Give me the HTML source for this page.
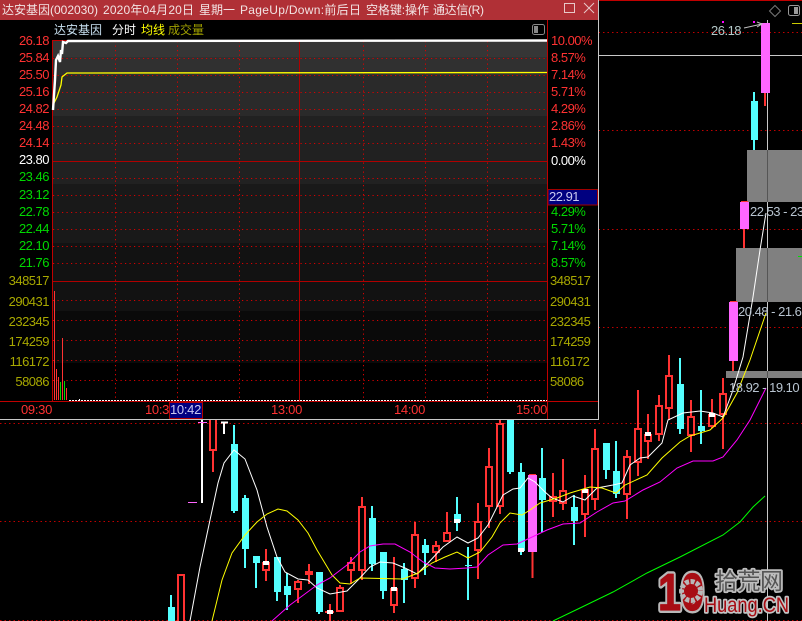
<!DOCTYPE html>
<html><head><meta charset="utf-8"><style>
html,body{margin:0;padding:0;background:#000;width:802px;height:621px;overflow:hidden}
svg{display:block}
text{font-family:"Liberation Sans","Noto Sans CJK SC",sans-serif;font-size:12px}
.n text,text.n{font-size:13px;letter-spacing:-.5px}
.t text{font-size:13px;letter-spacing:-.3px}
.c{shape-rendering:crispEdges}
.d{shape-rendering:auto}
</style></head><body>
<svg width="802" height="621" viewBox="0 0 802 621" xmlns="http://www.w3.org/2000/svg">
<rect width="802" height="621" fill="#000"/>
<rect x="598" y="0" width="204" height="1" fill="#c00000" class="c"/>
<g class="d" stroke="#c00000" stroke-dasharray="1.5 3" stroke-width="1"><path d="M0 32.5H802M0 130.5H802M0 229.5H802M0 327.5H802M0 423.5H802M0 521.5H802M0 620.5H802"/></g>
<g class="c">
<!-- gray boxes -->
<rect x="747" y="150" width="55" height="52" fill="#808080"/>
<rect x="736" y="248" width="66" height="54" fill="#808080"/>
<rect x="726" y="371" width="76" height="7" fill="#808080"/>
<!-- crosshair -->
<path d="M767.5 20V621" stroke="#c8c8c8"/>
<path d="M767.5 150V202M767.5 248V302M767.5 371V378" stroke="#555"/>
<path d="M598 55.5H802" stroke="#c8c8c8"/>
<!-- red wicks -->
<path stroke="#ff3232" stroke-width="2" fill="none" d="M213 451V472M266 549V562M266 571V581M298 580V581M298 590V603M309 564V571M309 575V584M330 604V621M340 585V587M351 557V562M351 571V584M362 497V506M362 571V580M394 557V588M394 606V613M415 522V534M415 579V588M436 541V545M436 553V562M447 512V532M478 503V521M478 551V579M489 448V466M489 507V528M500 420V423M500 507V514M553 473V496M553 502V517M563 459V490M563 504V510M585 475V489M585 515V537M595 429V448M595 500V510M627 450V456M627 495V519M638 390V428M638 463V476M648 414V434M648 442V459M659 395V405M659 435V441M669 355V375M669 409V420M691 400V416M691 436V452M712 399V414M712 427V428M723 378V393M723 415V449M532.5 552V578M733 361V371M744 229V248M765 93V106"/>
<!-- red hollow bodies -->
<g fill="#000" stroke="#ff3232" stroke-width="2">
<rect x="178" y="575" width="6" height="60"/><rect x="210" y="400" width="6" height="50"/><rect x="263" y="563" width="6" height="7"/><rect x="295" y="582" width="6" height="7"/><rect x="306" y="572" width="6" height="2"/><rect x="337" y="588" width="6" height="23"/><rect x="348" y="563" width="6" height="7"/><rect x="359" y="507" width="6" height="63"/><rect x="391" y="589" width="6" height="16"/><rect x="412" y="535" width="6" height="43"/><rect x="433" y="546" width="6" height="6"/><rect x="444" y="533" width="6" height="8"/><rect x="475" y="522" width="6" height="28"/><rect x="486" y="467" width="6" height="39"/><rect x="497" y="424" width="6" height="82"/><rect x="550" y="497" width="6" height="4"/><rect x="560" y="491" width="6" height="12"/><rect x="582" y="490" width="6" height="24"/><rect x="592" y="449" width="6" height="50"/><rect x="624" y="457" width="6" height="37"/><rect x="635" y="429" width="6" height="33"/><rect x="645" y="435" width="6" height="6"/><rect x="656" y="406" width="6" height="28"/><rect x="666" y="376" width="6" height="32"/><rect x="688" y="417" width="6" height="18"/><rect x="709" y="415" width="6" height="11"/><rect x="720" y="394" width="6" height="20"/>
</g>
<rect x="325" y="611" width="9" height="2" fill="#ff3232"/>
<!-- cyan -->
<path stroke="#54ffff" stroke-width="2" fill="none" d="M171 595V607M234 425V513M245 495V568M256 563V588M277 557V601M287 573V610M319 612V614M372 506V571M383 591V599M404 563V603M425 539V575M457 497V531M468 547V600M510 472V474M521 463V555M542 448V532M574 495V545M606 470V479M616 441V498M680 358V434M701 390V444M754 92V150"/>
<g fill="#54ffff"><rect x="168" y="607" width="7" height="20"/><rect x="231" y="444" width="7" height="67"/><rect x="242" y="498" width="7" height="51"/><rect x="253" y="556" width="7" height="7"/><rect x="274" y="557" width="7" height="35"/><rect x="284" y="586" width="7" height="9"/><rect x="316" y="572" width="7" height="40"/><rect x="369" y="518" width="7" height="46"/><rect x="380" y="552" width="7" height="39"/><rect x="401" y="569" width="7" height="11"/><rect x="422" y="545" width="7" height="8"/><rect x="454" y="514" width="7" height="8"/><rect x="465" y="565" width="7" height="1"/><rect x="507" y="420" width="7" height="52"/><rect x="518" y="472" width="7" height="79"/><rect x="539" y="478" width="7" height="22"/><rect x="571" y="507" width="7" height="14"/><rect x="603" y="443" width="7" height="27"/><rect x="613" y="471" width="7" height="23"/><rect x="677" y="384" width="7" height="45"/><rect x="698" y="426" width="7" height="5"/><rect x="751" y="101" width="7" height="39"/></g>
<!-- magenta bodies -->
<g fill="#ff66ff"><rect x="528" y="475" width="9" height="77"/><rect x="729" y="302" width="9" height="59"/><rect x="740" y="202" width="9" height="27"/><rect x="761" y="23" width="9" height="70"/></g>
<path d="M529 474.5H536M730 301.5H737M741 201.5H748" stroke="#ff3232"/>
<!-- small white squares -->
<g fill="#fff"><rect x="263" y="561" width="6" height="4"/><rect x="391" y="587" width="6" height="4"/><rect x="327" y="610" width="6" height="4"/><rect x="645" y="432" width="6" height="4"/><rect x="709" y="413" width="6" height="4"/><rect x="582" y="489" width="6" height="4"/><rect x="454" y="519" width="6" height="4"/><rect x="518" y="548" width="6" height="4"/></g>
<!-- doji -->
<path d="M202 419V503" stroke="#fff" stroke-width="2"/>
<path d="M224 422V434" stroke="#fff" stroke-width="2"/>
<path d="M221 422.5H228" stroke="#fff" stroke-width="2"/>
<path d="M188 502.5H197M198 422.5H207" stroke="#ff66ff" stroke-width="1"/>
</g>
<!-- MA lines -->
<g fill="none" stroke-width="1">
<polyline stroke="#fff" points="190,621 200,567 210,520 218,483 224,463 234,450 245,459 257,490 267,527 277,557 285,572 298,579 308,580 317,588 330,594 347,591 358,580 370,567 380,562 393,563 405,568 417,574 428,563 443,547 457,537 468,543 478,538 488,525 497,507 503,495 513,489 520,488 528,478 535,482 545,492 552,498 563,502 573,496 585,500 597,488 613,485 622,483 630,465 640,458 648,457 662,443 668,420 683,413 700,411 713,413 723,417 733,390 743,357 753,297 760,250 766,213"/>
<polyline stroke="#ffff00" points="212,621 222,580 232,553 245,535 257,522 267,514 278,509 287,511 298,520 308,533 317,550 332,575 340,583 350,584 360,578 403,579 418,573 432,563 445,557 457,552 468,558 480,552 492,537 500,523 510,513 522,515 530,510 540,503 557,498 570,493 580,490 590,487 602,488 616,493 625,485 647,475 662,458 680,442 690,436 710,430 723,418 737,393 750,360 766,313"/>
<polyline stroke="#ff00ff" points="272,621 290,605 317,585 330,578 347,565 360,552 370,546 383,544 395,544 410,552 423,562 435,568 450,569 467,568 477,567 488,555 503,545 517,544 530,538 547,530 563,524 580,523 597,512 613,503 625,501 643,490 660,482 677,468 693,461 713,461 723,457 737,440 750,420 766,388"/>
<polyline stroke="#00ff00" points="553,621 580,608 613,592 647,573 680,557 723,535 740,522 753,507 765,496"/>
</g>
<!-- right labels -->
<text class="n" x="711" y="35" fill="#b4c8c8">26.18</text>
<polyline points="744,28 762,24" stroke="#c0c0c0" fill="none"/>
<path d="M757 22l5 2-5 3" stroke="#c0c0c0" fill="none"/>
<g class="c" fill="#ff00ff"><rect x="722" y="21" width="2" height="2"/><rect x="753" y="21" width="2" height="2"/></g>
<rect x="792" y="23" width="10" height="1" fill="#cccc00" class="c"/>
<rect x="798" y="256" width="4" height="1" fill="#00e000" class="c"/>
<g class="n" fill="#b8c4d0">
<text x="750" y="216">22.53 - 23.</text>
<text x="738" y="316">20.48 - 21.6</text>
<text x="729" y="392">18.92 - 19.10</text>
</g>
<path d="M775 5.5l5.5 5.5-5.5 5.5-5.5-5.5z" fill="none" stroke="#777"/>
<rect x="788.5" y="5.5" width="11" height="10" rx="2" fill="none" stroke="#999"/>
<rect x="794" y="7" width="4" height="7" fill="#999" class="c"/>
<!-- logo -->
<g>
<text x="658" y="610" style="font-size:52px;font-weight:700" fill="#b8b8b8" stroke="#b8b8b8" stroke-width="6" stroke-linejoin="round" textLength="46" lengthAdjust="spacingAndGlyphs">10</text>
<text x="658" y="610" style="font-size:52px;font-weight:700" fill="#a80d14" stroke="#a80d14" stroke-width="1.2" stroke-linejoin="round" textLength="46" lengthAdjust="spacingAndGlyphs">10</text>
<ellipse cx="691" cy="591" rx="7" ry="13" fill="#a80d14"/>
<circle cx="691" cy="591" r="9.5" fill="none" stroke="#b8b8b8" stroke-width="5" stroke-dasharray="4 1.5"/>
<circle cx="691" cy="591" r="3" fill="#a80d14"/>
<text x="715" y="589" style="font-size:23px;paint-order:stroke" fill="#555" stroke="#bdbdbd" stroke-width="3.5" stroke-linejoin="round" textLength="68">拾荒网</text>
<text x="704" y="612" style="font-size:21px;paint-order:stroke" fill="#a80d14" stroke="#c4c4c4" stroke-width="3.5" stroke-linejoin="round" textLength="85" lengthAdjust="spacingAndGlyphs">Huang.CN</text>
</g>

<!-- window -->
<rect x="0" y="0" width="598" height="419" fill="#000"/>
<rect x="0" y="0" width="598" height="20" fill="#b03036"/>
<g fill="#f2e4e4">
<text x="2" y="14" textLength="96">达安基因(002030)</text>
<text x="103" y="14" textLength="91">2020年04月20日</text>
<text x="199" y="14" textLength="36">星期一</text>
<text x="240" y="14" textLength="121">PageUp/Down:前后日</text>
<text x="366" y="14" textLength="63">空格键:操作</text>
<text x="433" y="14" textLength="51">通达信(R)</text>
</g>
<g fill="none" stroke="#e8c8c8" class="c"><rect x="564.5" y="3.5" width="10" height="9"/></g>
<path d="M584 3l10 10M594 3L584 13" stroke="#e8c8c8" fill="none"/>
<text x="54" y="34" fill="#c8e0f0">达安基因</text>
<text x="112" y="34" fill="#fff">分时</text>
<text x="141" y="34" fill="#ffff00">均线</text>
<text x="168" y="34" fill="#a0a000">成交量</text>
<rect x="532.5" y="24.5" width="12" height="10" rx="2" fill="none" stroke="#888"/>
<rect x="534" y="26" width="4" height="7" fill="#888" class="c"/>
<g class="c">
<rect x="53" y="41" width="494" height="16" fill="#363636"/>
<rect x="53" y="57" width="494" height="18" fill="#303030"/>
<rect x="53" y="75" width="494" height="41" fill="#2a2a2a"/>
<rect x="53" y="116" width="494" height="68" fill="#212121"/>
<rect x="53" y="184" width="494" height="59" fill="#191919"/>
<rect x="53" y="243" width="494" height="68" fill="#121212"/>
<rect x="53" y="311" width="494" height="52" fill="#0a0a0a"/>
</g>
<g class="d" stroke="#d80000" stroke-dasharray="1.2 3.3"><path d="M53 58.5H547M53 75.5H547M53 92.5H547M53 109.5H547M53 126.5H547M53 143.5H547M53 178.5H547M53 195.5H547M53 212.5H547M53 229.5H547M53 246.5H547M53 263.5H547M53 300.5H547M53 320.5H547M53 340.5H547M53 360.5H547M53 380.5H547"/><path d="M115.5 41V401M177.5 41V401M239.5 41V401M363.5 41V401M425.5 41V401M487.5 41V401"/></g>
<g class="c">
<path d="M299.5 41V401M53 161.5H547M53 281.5H547" stroke="#b00000"/>
<path d="M52.5 40V401M547.5 20V419M0 401.5H598" stroke="#c00000"/>
<path d="M52 40.5H70" stroke="#c00000"/>
<!-- volume bars -->
<g stroke="#ff3232"><path d="M54.5 291V400M56.5 369V400M58.5 377V400M62.5 338V400M66.5 388V400"/></g>
<g stroke="#00d800"><path d="M60.5 382V400M64.5 381V400"/></g>
<path d="M69 400.5H547" stroke="#fff" stroke-dasharray="2 1"/>
<rect x="79" y="399" width="1" height="1" fill="#fff"/>
</g>
<polyline points="53,105 57,97 61,85 62,77 67,73 90,73 547,72.5" stroke="#ffff00" fill="none" stroke-width="1.3"/>
<polyline points="53,110 54,95 55,80 56,60 58,56 60,62 61,50 62,54 63,42 66,43 68,41 547,40.5" stroke="#fff" fill="none" stroke-width="2.4"/>
<!-- left axis -->
<g class="n" text-anchor="end" fill="#ff3232">
<text x="49" y="45">26.18</text><text x="49" y="62">25.84</text><text x="49" y="79">25.50</text><text x="49" y="96">25.16</text><text x="49" y="113">24.82</text><text x="49" y="130">24.48</text><text x="49" y="147">24.14</text>
<text x="49" y="164" fill="#fff">23.80</text>
<g fill="#00d800"><text x="49" y="181">23.46</text><text x="49" y="199">23.12</text><text x="49" y="216">22.78</text><text x="49" y="233">22.44</text><text x="49" y="250">22.10</text><text x="49" y="267">21.76</text></g>
<g fill="#a8a800"><text x="49" y="285">348517</text><text x="49" y="306">290431</text><text x="49" y="326">232345</text><text x="49" y="346">174259</text><text x="49" y="366">116172</text><text x="49" y="386">58086</text></g>
</g>
<!-- right axis -->
<g class="n" fill="#ff3232">
<text x="551" y="45">10.00%</text><text x="551" y="62">8.57%</text><text x="551" y="79">7.14%</text><text x="551" y="96">5.71%</text><text x="551" y="113">4.29%</text><text x="551" y="130">2.86%</text><text x="551" y="147">1.43%</text>
<text x="551" y="165" fill="#fff">0.00%</text>
<g fill="#00d800"><text x="551" y="216">4.29%</text><text x="551" y="233">5.71%</text><text x="551" y="250">7.14%</text><text x="551" y="267">8.57%</text></g>
<g fill="#a8a800"><text x="550" y="285">348517</text><text x="550" y="306">290431</text><text x="550" y="326">232345</text><text x="550" y="346">174259</text><text x="550" y="366">116172</text><text x="550" y="386">58086</text></g>
</g>
<rect x="548" y="189.5" width="49.5" height="15.5" fill="#000080" stroke="#a00000" class="c"/>
<text class="n" x="549" y="201" fill="#c8c8f0">22.91</text>
<!-- time axis -->
<g class="t" fill="#ff3232">
<text x="21" y="414">09:30</text>
<text x="145" y="414">10:3</text>
<text x="271" y="414">13:00</text>
<text x="394" y="414">14:00</text>
<text x="516" y="414">15:00</text>
</g>
<rect x="169.5" y="402.5" width="33" height="16" fill="#000080" stroke="#b00000" class="c"/>
<g class="t"><text x="170" y="414" fill="#c8c8f0">10:42</text></g>
<path d="M0 419.5H599M598.5 0V420" stroke="#c8c8c8" class="c"/>
</svg>
</body></html>
